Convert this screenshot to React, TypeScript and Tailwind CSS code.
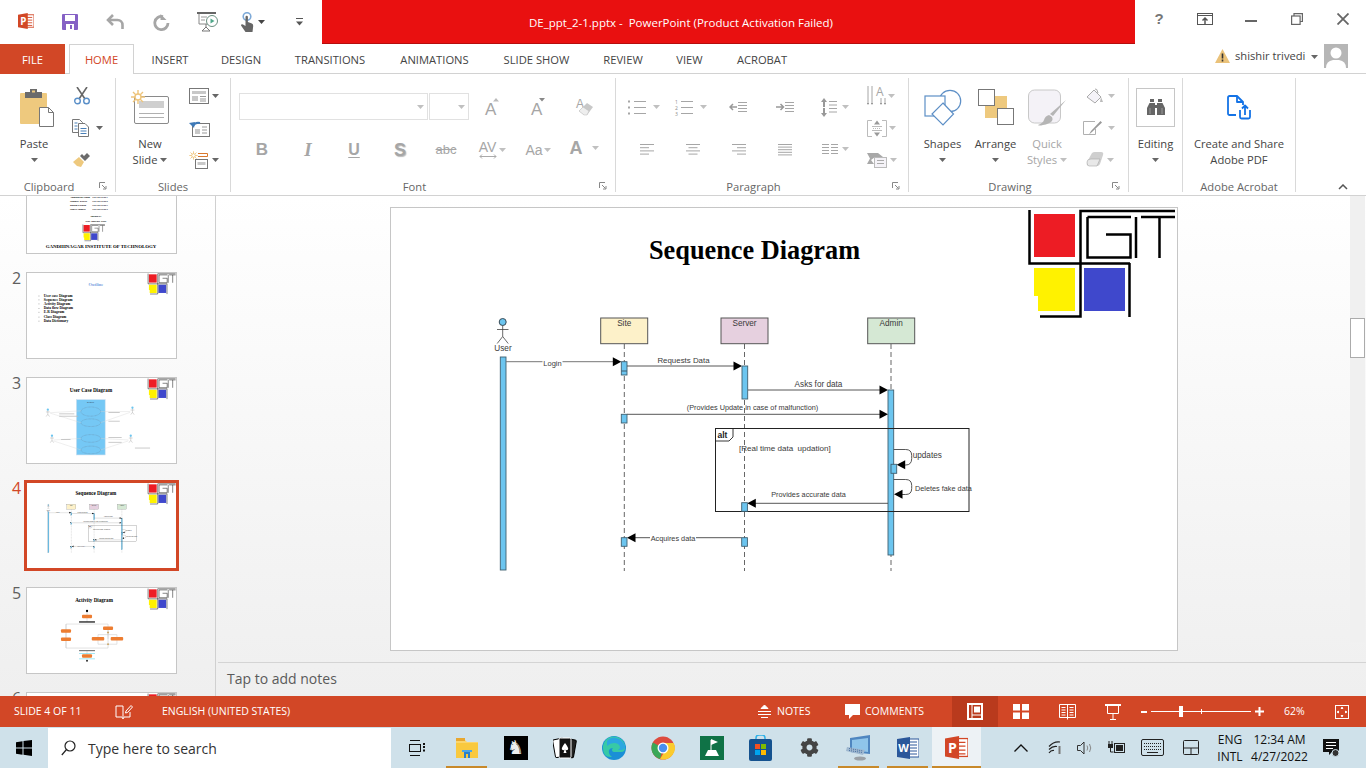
import React from "react";
import { FaCog } from "react-icons/fa";

const G = "#a6a6a6";
const D = "#666666";

const Caret = ({ c = D, className = "" }: { c?: string; className?: string }) => (
  <svg width="7" height="4" viewBox="0 0 7 4" className={`shrink-0 ${className}`}>
    <path d="M0 0h7L3.5 4z" fill={c} />
  </svg>
);

/* ---------- title bar icons ---------- */
const PptLogo = ({ s = 16 }: { s?: number }) => (
  <svg width={s} height={s} viewBox="0 0 18 18">
    <rect x="8" y="2" width="10" height="14" fill="#fff" stroke="#d24726" />
    <path d="M10 5h6M10 8h6M10 11h6M10 14h6" stroke="#d24726" strokeWidth="1" />
    <path d="M0 2l11-2v18L0 16z" fill="#d24726" />
    <text x="2.4" y="13" fontSize="11" fontWeight="700" fill="#fff">P</text>
  </svg>
);

const SaveIcon = () => (
  <svg width="16" height="16" viewBox="0 0 16 16">
    <rect width="16" height="16" rx="1" fill="#8561c5" />
    <rect x="3" y="1" width="10" height="6" fill="#fff" />
    <rect x="4" y="10" width="8" height="6" fill="#fff" />
    <rect x="8" y="11" width="2" height="4" fill="#8561c5" />
  </svg>
);

const UndoIcon = () => (
  <svg width="18" height="16" viewBox="0 0 18 16" fill="none" stroke={G} strokeWidth="2.6">
    <path d="M2.5 6h9a5 5 0 0 1 5 5v4" />
    <path d="M7 1L2 6l5 5" />
  </svg>
);

const RedoIcon = () => (
  <svg width="17" height="17" viewBox="0 0 17 17" fill="none">
    <path d="M10 2.6a6.6 6.6 0 1 0 5 6.4" stroke={G} strokeWidth="2.8" />
    <path d="M6.5 0v6h6z" fill={G} transform="translate(1 0)" />
  </svg>
);

const PresentIcon = () => (
  <svg width="21" height="20" viewBox="0 0 21 20" fill="none">
    <path d="M0 1h19" stroke="#666" strokeWidth="2" />
    <path d="M2 2v10h11" stroke="#888" />
    <path d="M9 12v3M9 15l-4 4h8z" stroke="#777" />
    <path d="M4 5h6M4 8h4" stroke="#999" />
    <circle cx="15" cy="9" r="5.5" fill="#fff" stroke="#6a8f80" />
    <path d="M13.5 6.5v5l4-2.5z" fill="#4fa88a" />
  </svg>
);

const TouchIcon = () => (
  <svg width="13" height="20" viewBox="0 0 13 20" fill="none">
    <circle cx="6" cy="4.5" r="3.8" stroke="#7eaad8" strokeWidth="1.6" />
    <path d="M4.5 5a1.2 1.2 0 0 1 2.4 0v5l4 1.5q1.5.7 1.3 2.5L11.500 20H4.500L0 13.500q0-1.600 2-1l2.500 1.500z" fill="#666" />
  </svg>
);

const QatIcon = () => (
  <svg width="7" height="8" viewBox="0 0 7 8">
    <path d="M0 .5h7" stroke="#555" />
    <path d="M0 3.500h7L3.500 7.500z" fill="#555" />
  </svg>
);

const HelpIcon = () => <span className="text-[#777] text-[15px] font-bold font-['Liberation_Sans']">?</span>;

const DisplayIcon = () => (
  <svg width="16" height="12" viewBox="0 0 16 12" fill="none" stroke="#555">
    <rect x=".5" y=".5" width="15" height="11" />
    <path d="M.5 2.500h15" />
    <path d="M8 11V5M5.500 7.500L8 5l2.500 2.500" strokeWidth="1.5" />
  </svg>
);

const MinIcon = () => <div className="w-[12px] h-[2px] mt-[4px] bg-[#666]" />;

const RestoreIcon = () => (
  <svg width="12" height="12" viewBox="0 0 12 12" fill="none" stroke="#666" strokeWidth="1.2">
    <rect x=".6" y="3" width="8.500" height="8.400" />
    <path d="M3 3V.6h8.400V8.500H9" />
  </svg>
);

const CloseIcon = () => (
  <svg width="12" height="12" viewBox="0 0 12 12" stroke="#666" strokeWidth="1.8">
    <path d="M.5.5l11 11M11.500.5l-11 11" />
  </svg>
);

/* ---------- ribbon icons ---------- */
const PasteIcon = () => (
  <svg width="34" height="38" viewBox="0 0 34 38">
    <rect x="0" y="4" width="27" height="31" rx="1" fill="#eec97e" />
    <path d="M5 3h5V0h7v3h5v6H5z" fill="#6b6b6b" />
    <rect x="12" y="1.500" width="3" height="2" fill="#eec97e" />
    <path d="M19.500 18.500h9l5 5v14h-14z" fill="#fff" stroke="#777" />
    <path d="M28.500 18.500v5h5" fill="none" stroke="#777" />
  </svg>
);

const ScissorsIcon = () => (
  <svg width="16" height="18" viewBox="0 0 16 18" fill="none">
    <path d="M3 0l8 12M13 0L5 12" stroke="#666" strokeWidth="1.6" />
    <circle cx="3.500" cy="14" r="2.800" stroke="#5a8fc8" strokeWidth="1.4" />
    <circle cx="12.500" cy="14" r="2.800" stroke="#5a8fc8" strokeWidth="1.4" />
  </svg>
);

const CopyIcon = () => (
  <svg width="17" height="18" viewBox="0 0 17 18" fill="#fff" stroke="#777">
    <path d="M.5.500h7l3 3v10H.5z" />
    <path d="M6.500 4.500h6.500l3.500 3.500v9.500h-10z" />
    <path d="M2.500 4h3M2.500 7h3M2.500 10h3M8.500 9.500h6M8.500 12h6M8.500 14.500h6" stroke="#4a80b8" />
  </svg>
);

const BrushIcon = () => (
  <svg width="18" height="15" viewBox="0 0 18 15">
    <path d="M0 9l6-5 5 5-3 5-4-1z" fill="#eec97e" />
    <path d="M7 3l5 5 2-2-5-5zM11 3l3-3 3 3-3 3z" fill="#6b6b6b" />
  </svg>
);

const Sun = ({ x, y, s = 1 }: { x: number; y: number; s?: number }) => (
  <g transform={`translate(${x} ${y}) scale(${s})`} stroke="#eec47a" strokeWidth="1.4">
    <path d="M-7 0H7M0-7V7M-5-5L5 5M5-5L-5 5" />
    <circle r="3" fill="#fff" />
  </g>
);

const NewSlideIcon = () => (
  <svg width="39" height="35" viewBox="0 0 39 35" fill="none">
    <rect x="3.500" y="6.500" width="34" height="27" rx="1.500" fill="#fff" stroke="#8a8a8a" />
    <rect x="8" y="11" width="25" height="7" fill="#cfcfcf" />
    <path d="M8 23.500h25M8 27.500h25" stroke="#b0b0b0" />
    <Sun x={7} y={7} />
  </svg>
);

const LayoutIcon = () => (
  <svg width="20" height="16" viewBox="0 0 20 16" fill="#fff" stroke="#777">
    <rect x=".5" y=".5" width="19" height="15" />
    <path d="M3 3h14v3H3zM3 8h6v5H3z" fill="#c8c8c8" stroke="none" />
    <path d="M11 8.500h6M11 11h6M11 13h6" stroke="#999" />
  </svg>
);

const ResetIcon = () => (
  <svg width="21" height="17" viewBox="0 0 21 17" fill="none">
    <rect x="3.500" y="3.500" width="17" height="13" fill="#fff" stroke="#777" />
    <path d="M6 9h5v5H6z" fill="#c8c8c8" />
    <path d="M13 7h5M13 10h5M13 13h5" stroke="#999" />
    <path d="M4 6q2-4 7-3" stroke="#3f7ab8" strokeWidth="2" />
    <path d="M0 3l5 5 1-6z" fill="#3f7ab8" />
  </svg>
);

const SectionIcon = () => (
  <svg width="20" height="18" viewBox="0 0 20 18" fill="none">
    <Sun x={4.500} y={4.500} s={0.6} />
    <path d="M9 2.500h9.500v3H9" stroke="#d9782d" />
    <rect x="6.500" y="8.500" width="12" height="9" fill="#fff" stroke="#777" />
    <rect x="8.500" y="11" width="8" height="3" fill="#c8c8c8" />
  </svg>
);

const lineSets = {
  left: [14, 9, 14, 9],
  center: [14, 9, 14, 9],
  right: [14, 9, 14, 9],
  just: [14, 14, 14, 14, 14],
};

const AlignIcon = ({ kind }: { kind: keyof typeof lineSets }) => {
  const lines = lineSets[kind];
  return (
    <svg width="16" height="13" viewBox="0 0 16 13" stroke={G}>
      {lines.map((w, i) => {
        const x = kind === "left" ? 1 : kind === "right" ? 15 - w : 8 - w / 2;
        const step = kind === "just" ? 2.6 : 3.2;
        return <path key={i} d={`M${x} ${i * step + 1.500}h${w}`} />;
      })}
    </svg>
  );
};

const Columns = () => (
  <span className="flex items-center gap-[4px]">
    <svg width="16" height="12" viewBox="0 0 16 12" stroke={G}>
      <path d="M0 1.500h7M0 4.500h7M0 7.500h7M0 10.500h7M9 1.500h7M9 4.500h7M9 7.500h7M9 10.500h7" />
    </svg>
    <Caret c="#c0c0c0" />
  </span>
);

const BulletIcon = () => (
  <span className="flex items-center gap-[7px]">
    <svg width="19" height="17" viewBox="0 0 19 17" stroke={G}>
      <path d="M7 2.500h12M7 8.500h12M7 14.500h12" />
      <path d="M1 2.500h2M1 8.500h2M1 14.500h2" strokeWidth="2" />
    </svg>
    <Caret c="#c0c0c0" />
  </span>
);

const NumberIcon = () => (
  <span className="flex items-center gap-[7px]">
    <svg width="18" height="17" viewBox="0 0 18 17" stroke={G} className="overflow-visible">
      <path d="M6 2.500h12M6 8.500h12M6 14.500h12" />
      <text x="0" y="4.500" fontSize="5" stroke="none" fill="#8a8a8a">1</text>
      <text x="0" y="10.500" fontSize="5" stroke="none" fill="#8a8a8a">2</text>
      <text x="0" y="16.500" fontSize="5" stroke="none" fill="#8a8a8a">3</text>
    </svg>
    <Caret c="#c0c0c0" />
  </span>
);

const IndentIcon = ({ more }: { more?: boolean }) => (
  <svg width="18" height="12" viewBox="0 0 18 12" fill="none" stroke={G}>
    <path d="M9 1.500h9M9 4.500h9M9 7.500h9M9 10.500h9" />
    {more ? <path d="M0 6h7M4.500 3l3 3-3 3" strokeWidth="1.500" stroke="#999" /> : <path d="M8 6H1M4 3L1 6l3 3" strokeWidth="1.500" stroke="#999" />}
  </svg>
);

const SpacingIcon = () => (
  <span className="flex items-center gap-[5px]">
    <svg width="16" height="19" viewBox="0 0 16 19" fill="none">
      <path d="M3 9V3M3 10v6" stroke="#999" strokeWidth="2" />
      <path d="M0 4l3-4 3 4zM0 15l3 4 3-4z" fill="#999" />
      <path d="M8 3.500h8M8 7h8M8 10.500h8M8 14h8" stroke={G} />
    </svg>
    <Caret c="#c0c0c0" />
  </span>
);

const TextDirIcon = () => (
  <span className="flex items-center gap-[2px]">
    <svg width="19" height="20" viewBox="0 0 19 20" fill="none" stroke={G} className="overflow-visible">
      <path d="M1 0v18M5 0v18M14 12v6M18 12v6" />
      <text x="9" y="10" fontSize="12" stroke="none" fill={G}>A</text>
      <path d="M0 17l1 2 1-2zM4 17l1 2 1-2zM13 17l1 2 1-2zM17 17l1 2 1-2z" fill="#888" stroke="none" />
    </svg>
    <Caret c="#c0c0c0" />
  </span>
);

const TextAlignIcon = () => (
  <span className="flex items-center gap-[2px]">
    <svg width="20" height="17" viewBox="0 0 20 17" fill="#f5f3f8" stroke="#bbb">
      <path d="M5 .500H.500v16H5M15 .500h4.500v16H15" fill="none" />
      <path d="M6 8.500h8" strokeDasharray="1 1" />
      <path d="M10 .500l3 4H7zM10 16.500l3-4H7z" fill="#999" stroke="none" />
      <path d="M5 6.500h10M5 10.500h10" />
    </svg>
    <Caret c="#c0c0c0" />
  </span>
);

const SmartArtIcon = () => (
  <span className="flex items-center gap-[3px]">
    <svg width="20" height="15" viewBox="0 0 20 15" fill="none">
      <path d="M0 0h11l5 4H8l-4 3L7 11H0l3-5.500z" fill="#a8a8a8" />
      <rect x="7.500" y="4.500" width="12" height="10" fill="#f5f3f8" stroke="#bbb" />
      <path d="M10 7.500h7M10 10.500h7" stroke="#aaa" />
    </svg>
    <Caret c="#c0c0c0" />
  </span>
);

const ShapesIcon = () => (
  <svg width="38" height="37" viewBox="0 0 38 37" fill="none" stroke="#5d8fc6" strokeWidth="1.200">
    <circle cx="26" cy="12" r="10.700" />
    <rect x="1" y="7" width="20" height="20" fill="#fff" />
    <path d="M19 14l10.500 11L19 36 8 25z" fill="#fff" />
  </svg>
);

const ArrangeIcon = () => (
  <svg width="36" height="36" viewBox="0 0 36 36">
    <rect x=".5" y=".5" width="16" height="16" fill="#fff" stroke="#777" />
    <rect x="17" y="7" width="12" height="12" fill="#eec97e" />
    <rect x="7" y="17" width="12" height="12" fill="#eec97e" />
    <rect x="19.500" y="19.500" width="16" height="16" fill="#fff" stroke="#777" />
  </svg>
);

const QuickStylesIcon = () => (
  <svg width="38" height="37" viewBox="0 0 38 37" fill="none">
    <rect x=".5" y="1" width="32" height="33" rx="6" fill="#f4f2f7" stroke="#c8c8c8" />
    <path d="M38 11L25 27l-3-2zM21 26q5 2 3 6-3 3-9 4-4 1-5 0 5-2 6-5 1-4 5-5z" fill="#b5b5b5" />
  </svg>
);

const FillIcon = () => (
  <span className="flex items-center gap-[5px]">
    <svg width="17" height="17" viewBox="0 0 17 17" fill="#f5f3f8" stroke="#aaa">
      <path d="M1 9l7-7 7 7-6 6z" />
      <path d="M9 1q2-1 3 4" fill="none" />
      <path d="M15 9l2 5h-3z" fill="#bbb" stroke="none" />
    </svg>
    <Caret c="#c0c0c0" />
  </span>
);

const PenIcon = () => (
  <span className="flex items-center gap-[5px]">
    <svg width="20" height="15" viewBox="0 0 20 15" fill="none" stroke="#b0b0b0">
      <path d="M12 .5H.5v13h12V8" />
      <path d="M19 1.500L9 11l-3 2.500L8 10 17.500 0z" fill="#999" stroke="none" />
    </svg>
    <Caret c="#c0c0c0" />
  </span>
);

const EffectIcon = () => (
  <span className="flex items-center gap-[3px]">
    <svg width="18" height="17" viewBox="0 0 18 17">
      <path d="M1 10l5-9q1-1 3-1h6q3 0 2 3l-3 9q-1 2-3 2H3q-3 0-2-4z" fill="#cfcfcf" />
      <path d="M1 10q0-3 4-3h9l-3 7H3q-2 0-2-4z" fill="#e8e8e8" stroke="#aaa" strokeWidth=".6" />
    </svg>
    <Caret c="#c0c0c0" />
  </span>
);

const BinocularsIcon = () => (
  <svg width="18" height="16" viewBox="0 0 18 16" fill="#666">
    <path d="M3 3V0h4v3zM11 3V0h4v3z" />
    <path d="M2.500 4H8v12H0V9zM10 4h5.500L18 9v7h-8z" />
    <rect x="7" y="6" width="4" height="3" />
    <path d="M3 9v6M15 9v6" stroke="#999" />
  </svg>
);

const AcrobatIcon = () => (
  <svg width="24" height="25" viewBox="0 0 24 25" fill="none" stroke="#1473e6" strokeWidth="1.800" strokeLinejoin="round">
    <path d="M9 20H2.500a1.500 1.500 0 0 1-1.500-1.500V2.500A1.500 1.500 0 0 1 2.500 1H10l6 6v3" />
    <path d="M10 1v6h6" />
    <path d="M13 15v7a1.500 1.500 0 0 0 1.500 1.500h7A1.500 1.500 0 0 0 23 22v-7M18 20v-9M15 13.500l3-3 3 3" />
  </svg>
);

const Launcher = () => (
  <svg width="8" height="8" viewBox="0 0 8 8" fill="none" stroke="#888" className="absolute right-[8px] top-[1px]">
    <path d="M.5 6V.5H6" />
    <path d="M3 3l3.500 3.500M7 4v3H4" />
  </svg>
);

/* ---------- ribbon parts ---------- */
const Group = ({ label, w, children, launcher = true }: { label: string; w: string; children: React.ReactNode; launcher?: boolean }) => (
  <div className={`${w} shrink-0 flex flex-col border-r border-[#d9d9d9]`}>
    <div className="h-[104px] flex">{children}</div>
    <div className={`relative h-[11px] text-[11.200px] leading-[12px] text-[#666] text-center mt-[2px] ${launcher ? "pr-[17px]" : ""}`}>
      {label}
      {launcher && <Launcher />}
    </div>
  </div>
);

const Large = ({ w, icon, lines, c = "text-[#444]", caret = D }: { w: string; icon: React.ReactNode; lines: React.ReactNode[]; c?: string; caret?: string }) => (
  <div className={`${w} shrink-0 flex flex-col items-center text-[11.200px] leading-[16px] ${c}`}>
    <div className="h-[58px] flex items-center justify-center shrink-0">{icon}</div>
    {lines.map((l, i) => (
      <div key={i} className="h-[16px] flex items-center gap-[3px] whitespace-nowrap">{l}</div>
    ))}
    {lines.length < 2 && (
      <div className="h-[16px] flex items-center"><Caret c={caret} /></div>
    )}
  </div>
);

const StackRow = ({ children, w = "w-[28px]", caret }: { children: React.ReactNode; w?: string; caret?: boolean }) => (
  <div className="h-[32px] flex items-center">
    <div className={`${w} flex items-center justify-center`}>{children}</div>
    {caret && <Caret />}
  </div>
);

const Box = ({ w, children }: { w: string; children: React.ReactNode }) => (
  <div className={`${w} h-full shrink-0 flex items-center justify-center`}>{children}</div>
);

const Ltr = ({ children, className = "" }: { children: React.ReactNode; className?: string }) => (
  <span className={`font-['Liberation_Sans'] text-[#a6a6a6] ${className}`}>{children}</span>
);

const Grow = ({ up }: { up?: boolean }) => (
  <svg width="18" height="18" viewBox="0 0 18 18" className="overflow-visible">
    <text x="1" y="17" fontSize="17" fill={G} fontFamily="Liberation Sans">A</text>
    <path d={up ? "M9 3.500h6L12 0z" : "M9 0h6l-3 3.500z"} fill={up ? "#bbb" : "#888"} />
  </svg>
);

const ClearFmt = () => (
  <svg width="18" height="19" viewBox="0 0 18 19" className="overflow-visible">
    <text x="0" y="11" fontSize="12" fill={G} fontFamily="Liberation Sans">A</text>
    <path d="M3 14l8-8 6 4-6 8H8z" fill="#c8c8c8" />
    <path d="M3 14l4-4 6 4-2 4H8z" fill="#eee" stroke="#bbb" strokeWidth=".5" />
  </svg>
);

const Ribbon = () => (
  <div className="h-[122px] shrink-0 flex pt-[4px] pb-[3px] border-b border-[#d2d2d2] bg-white">
    <Group label="Clipboard" w="w-[116px]">
      <div className="ml-[15px] w-[38px]">
        <Large w="w-[38px]" icon={<div className="relative left-[3px] top-[1px]"><PasteIcon /></div>} lines={["Paste"]} />
      </div>
      <div className="ml-[15px] pt-[2px]">
        <StackRow><ScissorsIcon /></StackRow>
        <StackRow caret><div className="-ml-[3px]"><CopyIcon /></div></StackRow>
        <StackRow><BrushIcon /></StackRow>
      </div>
    </Group>
    <Group label="Slides" w="w-[115px]" launcher={false}>
      <div className="ml-[14px]">
        <Large w="w-[40px]" icon={<NewSlideIcon />} lines={["New", <>Slide<Caret /></>]} />
      </div>
      <div className="ml-[16px] pt-[2px]">
        <StackRow w="w-[26px]" caret><LayoutIcon /></StackRow>
        <StackRow w="w-[26px]"><ResetIcon /></StackRow>
        <StackRow w="w-[26px]" caret><SectionIcon /></StackRow>
      </div>
    </Group>
    <Group label="Font" w="w-[385px]">
      <div className="pl-[8px] pt-[15px] flex flex-col">
        <div className="h-[27px] flex">
          <div className="w-[189px] border border-[#e1e1e1] flex items-center justify-end pr-[3px]"><Caret c="#c0c0c0" /></div>
          <div className="w-[40px] ml-[1px] border border-[#e1e1e1] flex items-center justify-end pr-[3px]"><Caret c="#c0c0c0" /></div>
          <Box w="w-[47px]"><Grow up /></Box>
          <Box w="w-[46px]"><Grow /></Box>
          <Box w="w-[46px]"><ClearFmt /></Box>
        </div>
        <div className="h-[30px] mt-[15px] flex">
          <Box w="w-[46px]"><Ltr className="text-[17px] font-bold">B</Ltr></Box>
          <Box w="w-[46px]"><span className="font-['Liberation_Serif'] text-[#a6a6a6] text-[19px] italic font-bold">I</span></Box>
          <Box w="w-[46px]"><Ltr className="text-[16px] font-bold underline underline-offset-2">U</Ltr></Box>
          <Box w="w-[46px]"><Ltr className="text-[18px] font-bold [text-shadow:1px_1px_1px_#bbb]">S</Ltr></Box>
          <Box w="w-[46px]"><Ltr className="text-[13px] line-through">abc</Ltr></Box>
          <Box w="w-[46px]">
            <div className="flex items-center gap-[2px]">
              <div className="flex flex-col items-center">
                <Ltr className="text-[14px] leading-[13px]">AV</Ltr>
                <svg width="18" height="5" viewBox="0 0 18 5" fill="none" stroke="#aaa"><path d="M1 2.500h16M3 .5L1 2.500l2 2M15 .5l2 2-2 2" /></svg>
              </div>
              <Caret c="#c0c0c0" />
            </div>
          </Box>
          <Box w="w-[46px]"><div className="flex items-center gap-[1px]"><Ltr className="text-[14px]">Aa</Ltr><Caret c="#c0c0c0" /></div></Box>
          <Box w="w-[46px]"><div className="flex items-center gap-[9px] -mt-[4px]"><Ltr className="text-[#8a8a8a] text-[18px] font-bold">A</Ltr><Caret c="#c0c0c0" /></div></Box>
        </div>
      </div>
    </Group>
    <Group label="Paragraph" w="w-[293px]">
      <div className="w-[246px] pt-[14px] flex flex-col">
        <div className="h-[30px] flex pl-[4px]">
          <Box w="w-[47px]"><BulletIcon /></Box>
          <Box w="w-[47px]"><NumberIcon /></Box>
          <Box w="w-[47px]"><IndentIcon /></Box>
          <Box w="w-[47px]"><IndentIcon more /></Box>
          <Box w="w-[54px]"><SpacingIcon /></Box>
        </div>
        <div className="h-[30px] mt-[12px] flex pl-[8px]">
          <Box w="w-[46px]"><AlignIcon kind="left" /></Box>
          <Box w="w-[46px]"><AlignIcon kind="center" /></Box>
          <Box w="w-[46px]"><AlignIcon kind="right" /></Box>
          <Box w="w-[46px]"><AlignIcon kind="just" /></Box>
          <Box w="w-[54px]"><Columns /></Box>
        </div>
      </div>
      <div className="ml-[5px] pt-[2px]">
        <div className="h-[32px] flex items-center"><TextDirIcon /></div>
        <div className="h-[32px] flex items-center"><TextAlignIcon /></div>
        <div className="h-[32px] flex items-center"><SmartArtIcon /></div>
      </div>
    </Group>
    <Group label="Drawing" w="w-[220px]">
      <div className="ml-[7px] flex">
        <Large w="w-[53px]" icon={<ShapesIcon />} lines={["Shapes"]} />
        <Large w="w-[53px]" icon={<ArrangeIcon />} lines={["Arrange"]} />
        <Large w="w-[50px]" c="text-[#a6a6a6]" icon={<QuickStylesIcon />} lines={["Quick", <>Styles<Caret c="#c0c0c0" /></>]} />
      </div>
      <div className="ml-[11px] pt-[2px]">
        <div className="h-[32px] flex items-center pl-[3px]"><FillIcon /></div>
        <div className="h-[32px] flex items-center"><PenIcon /></div>
        <div className="h-[32px] flex items-center pl-[3px]"><EffectIcon /></div>
      </div>
    </Group>
    <Group label="" w="w-[54px]" launcher={false}>
      <Large
        w="w-full"
        icon={<div className="w-[39px] h-[39px] border border-[#c6c6c6] flex items-center justify-center"><BinocularsIcon /></div>}
        lines={["Editing"]}
      />
    </Group>
    <Group label="Adobe Acrobat" w="w-[113px]" launcher={false}>
      <Large w="w-full" icon={<AcrobatIcon />} lines={["Create and Share", "Adobe PDF"]} />
    </Group>
    <div className="flex-1 flex items-end justify-end pr-[18px] pb-[2px]">
      <svg width="10" height="6" viewBox="0 0 10 6" fill="none" stroke="#555" strokeWidth="1.500"><path d="M1 5l4-4 4 4" /></svg>
    </div>
  </div>
);

/* ---------- slide drawings, in screen coordinates ---------- */
const Logo = () => (
  <g>
    <rect x="1034" y="214" width="41" height="43" fill="#ed1c24" />
    <path d="M1034 268h41v43h-37v-15h-4z" fill="#fff200" />
    <rect x="1084" y="268" width="41" height="43" fill="#3f48cc" />
    <path
      d="M1029.500 210v53.500h100.500M1040 316.500h40.500V211H1175M1087.500 217H1131M1141 217h34M1087.500 217v40.500H1130.500V234.500H1106M1136 217v41M1159.500 217v41M1129.500 263v54"
      fill="none"
      stroke="#000"
      strokeWidth="2.500"
    />
  </g>
);

const Act = ({ x, y1, y2, w = 5.700 }: { x: number; y1: number; y2: number; w?: number }) => (
  <rect x={x} y={y1} width={w} height={y2 - y1} fill="#6cc5ef" stroke="#3f5f70" strokeWidth="0.900" />
);

const Head = ({ x, y, left }: { x: number; y: number; left?: boolean }) => (
  <path d={left ? `M${x} ${y}l8.500-4.500v9z` : `M${x} ${y}l-8.500-4.500v9z`} fill="#000" />
);

const Lbl = ({ x, y, children, anchor = "middle", bg, size = 8.200 }: { x: number; y: number; children: string; anchor?: "middle" | "start"; bg?: number; size?: number }) => (
  <>
    {bg && <rect x={x - bg / 2} y={y - 7} width={bg} height={9} fill="#fff" />}
    <text x={x} y={y} fontSize={size} fill="#3a3a3a" textAnchor={anchor}>{children}</text>
  </>
);

const Lifebox = ({ x, fill, name }: { x: number; fill: string; name: string }) => (
  <>
    <rect x={x} y="318" width="47" height="25.700" fill={fill} stroke="#555" strokeWidth="1" />
    <text x={x + 23.500} y="326" fontSize="8.200" fill="#3a3a3a" textAnchor="middle">{name}</text>
  </>
);

const Sequence = () => (
  <g>
    <g stroke="#555" strokeWidth="0.900" strokeDasharray="5 3">
      <path d="M624.300 344V571M744.500 344V571M891 344V571" />
    </g>
    <Lifebox x={600.700} fill="#fdf1c9" name="Site" />
    <Lifebox x={721} fill="#e6d0df" name="Server" />
    <Lifebox x={867.700} fill="#d5e8d4" name="Admin" />

    <circle cx="502.700" cy="322" r="3.500" fill="#6cc5ef" stroke="#3a4a55" />
    <path d="M502.700 325.500v11M497 329.500h11.500M502.700 336.500l-5.500 7M502.700 336.500l5.500 7" stroke="#444" strokeWidth="0.800" fill="none" />
    <Lbl x={503} y={351}>User</Lbl>
    <Act x={500.300} y1={357} y2={570} />

    <path d="M506 361.700H613" stroke="#777" strokeWidth="1" />
    <Lbl x={552.500} y={366} bg={20} size={7.500}>Login</Lbl>
    <Head x={621.300} y={361.700} />
    <Act x={621.300} y1={361.700} y2={375} />
    <path d="M621.300 371h5.700" stroke="#3f5f70" />

    <path d="M627 366H734" stroke="#444" strokeWidth="0.900" />
    <Lbl x={683.500} y={362.500} size={7.900}>Requests Data</Lbl>
    <Head x={742} y={366} />
    <Act x={742} y1={366} y2={399} />

    <path d="M748 390H880" stroke="#444" strokeWidth="0.900" />
    <Lbl x={818.500} y={386.500}>Asks for data</Lbl>
    <Head x={888} y={390} />
    <Act x={888} y1={390} y2={555} />

    <path d="M627 414.300H880" stroke="#444" strokeWidth="0.900" />
    <Lbl x={752.500} y={409.500} size={7.300}>(Provides Update in case of malfunction)</Lbl>
    <Head x={888} y={414.300} />
    <Act x={621.300} y1={414.300} y2={423} />

    <rect x="715.500" y="428.500" width="253.500" height="83" fill="none" stroke="#222" strokeWidth="1" />
    <path d="M715.500 441H729l4-4v-8.500" fill="none" stroke="#222" strokeWidth="0.900" />
    <text x="717.500" y="437.500" fontSize="8.500" fontWeight="700" fill="#222">alt</text>
    <text x="739" y="450.500" fontSize="8.050" fill="#3a3a3a" xmlSpace="preserve">[Real time data  updation]</text>

    <path d="M893.700 449.500h12q6 0 6 6v3q0 6.500-6 6.500h-3" fill="none" stroke="#444" strokeWidth="0.900" />
    <Head x={896.700} y={464.700} left />
    <Act x={891} y1={464.300} y2={473.300} />
    <Lbl x={912.700} y={458} anchor="start">updates</Lbl>

    <path d="M893.700 479.500h12q6 0 6 6v3q0 6-6 6h-4" fill="none" stroke="#444" strokeWidth="0.900" />
    <Head x={894} y={494.300} left />
    <Lbl x={915} y={490.500} anchor="start" size={7.300}>Deletes fake data</Lbl>

    <path d="M888 503.300H755" stroke="#444" strokeWidth="0.900" />
    <Head x={747.300} y={503.300} left />
    <Lbl x={808.500} y={497} size={7.300}>Provides accurate data</Lbl>
    <Act x={741.700} y1={502.700} y2={511.300} />

    <path d="M741.700 537.700H634" stroke="#444" strokeWidth="0.900" />
    <Head x={627} y={537.700} left />
    <Lbl x={673} y={540.500} bg={46} size={7.300}>Acquires data</Lbl>
    <Act x={741.700} y1={537.700} y2={546.300} />
    <Act x={621.300} y1={537.700} y2={546.300} />
  </g>
);

const Title = ({ children, y, x = 754, size = 27 }: { children: string; y: number; x?: number; size?: number }) => (
  <text x={x} y={y} textAnchor="middle" fontSize={size} fontWeight="700" fill="#000" fontFamily="Liberation Serif">{children}</text>
);

const students = [
  ["Anmolpreet singh", "190120107001", 366],
  ["Tanmay Rawal", "190120107002", 386],
  ["Rohan Pathak", "190120107003", 404],
  ["Tanya Shukla", "190120107004", 424],
] as const;

const Slide1Body = () => (
  <g fontFamily="Liberation Serif" fontWeight="700" fill="#000" fontSize="14">
    {students.map(([name, id, y]) => (
      <g key={id}>
        <text x="617" y={y}>{name}</text>
        <text x="733" y={y} fill="#223">{id}</text>
      </g>
    ))}
    <text x="754" y="465" textAnchor="middle" fontSize="13">Guided by</text>
    <text x="754" y="490" textAnchor="middle" fontSize="13">Prof. Bhargav Patel</text>
    <g transform="translate(-138.400 333) scale(0.800)"><Logo /></g>
    <text x="781" y="624" textAnchor="middle" fontSize="26">GANDHINAGAR INSTITUTE OF TECHNOLOGY</text>
  </g>
);

const outline = [
  ["User case Diagram", 332],
  ["Sequence Diagram", 352],
  ["Activity Diagram", 373],
  ["Data flow Diagram", 397],
  ["E-R Diagram", 417],
  ["Class Diagram", 442],
  ["Data Dictionary", 463],
] as const;

const Slide2Body = () => (
  <g fontFamily="Liberation Serif">
    <text x="754" y="276" textAnchor="middle" fontSize="24" fill="#7a9fe0" fontWeight="700">Outline</text>
    {outline.map(([t, y]) => (
      <g key={t}>
        <path d={`M449 ${y - 5}h8`} stroke="#777" strokeWidth="2" />
        <text x="478" y={y} fontSize="19" fontWeight="700" fill="#000">{t}</text>
      </g>
    ))}
  </g>
);

const UcActor = ({ x, y }: { x: number; y: number }) => (
  <g fill="none" stroke="#999" strokeWidth="2">
    <circle cx={x} cy={y} r="6" fill="#6cc5ef" stroke="none" />
    <path d={`M${x} ${y + 6}v18M${x - 10} ${y + 12}h20M${x} ${y + 24}l-9 12M${x} ${y + 24}l9 12`} />
  </g>
);

const Slide3Body = () => (
  <g>
    <rect x="651" y="320" width="152" height="288" fill="#75c8f5" stroke="#cde" strokeWidth="3" />
    <g fill="none" stroke="#6a8aa5" strokeWidth="2.500" strokeDasharray="4 3">
      <ellipse cx="727" cy="382" rx="52" ry="24" />
      <ellipse cx="727" cy="440" rx="52" ry="20" />
      <ellipse cx="727" cy="522" rx="52" ry="20" />
      <ellipse cx="727" cy="582" rx="52" ry="20" />
    </g>
    <g stroke="#d5d5d5" strokeWidth="2" fill="none">
      <path d="M512 388L675 378M512 390L675 440M935 382L778 382M935 386L778 440M530 530L675 522M530 535L675 582M925 530L778 522M925 535L778 582" />
    </g>
    <g fill="#bbb">
      <rect x="560" y="392" width="80" height="4" />
      <rect x="560" y="404" width="100" height="4" />
      <rect x="820" y="385" width="60" height="4" />
      <rect x="820" y="430" width="60" height="4" />
      <rect x="570" y="525" width="50" height="4" />
      <rect x="820" y="515" width="70" height="4" />
      <rect x="820" y="540" width="70" height="4" />
      <rect x="960" y="570" width="80" height="4" />
    </g>
    <UcActor x={500} y={372} />
    <UcActor x={947} y={362} />
    <UcActor x={522} y={508} />
    <UcActor x={938} y={508} />
    <text x="725" y="338" textAnchor="middle" fontSize="11" fill="#345">System</text>
  </g>
);

const Node = ({ x, y, w }: { x: number; y: number; w: number }) => <rect x={x - w / 2} y={y - 9} width={w} height={18} rx="5" fill="#ed7d31" />;

const Slide5Body = () => (
  <g>
    <path
      d="M707 327V384M596 395H818V520H596zM596 395V520M707 534v27M818 417V472M765 472V450H865V472M765 472V500H865V472"
      stroke="#c4c4c4"
      strokeWidth="2.500"
      fill="none"
    />
    <circle cx="707" cy="327" r="6" fill="#000" />
    <rect x="665" y="381" width="84" height="6" fill="#000" />
    <Node x={707} y={356} w={53} />
    <Node x={596} y={431} w={53} />
    <Node x={596} y={474} w={53} />
    <Node x={818} y={417} w={53} />
    <Node x={765} y={472} w={66} />
    <Node x={865} y={472} w={66} />
    <path d="M818 433l6 6-6 6-6-6zM818 494l6 6-6 6-6-6z" fill="#c9a15a" />
    <rect x="665" y="532" width="84" height="4" fill="#333" />
    <rect x="665" y="546" width="84" height="3" fill="#5fd5ec" />
    <rect x="665" y="575" width="84" height="3" fill="#5fd5ec" />
    <Node x={707} y={561} w={53} />
    <circle cx="707" cy="586" r="5" fill="#222" />
  </g>
);

const Thumb = ({ n, active, children }: { n?: number; active?: boolean; children?: React.ReactNode }) => (
  <div className="flex h-[87px] shrink-0">
    <div className={`w-[26px] pl-[12px] text-[16px] leading-[17px] -mt-[2px] ${active ? "text-[#d24726]" : "text-[#5f5f5f]"}`}>{n}</div>
    <div className={`w-[151px] h-[87px] bg-white border ${active ? "border-[#d24726] ring-2 ring-[#d24726]" : "border-[#c6c6c6]"}`}>
      <svg viewBox="390 207 787 443" preserveAspectRatio="none" className="w-full h-full font-['Liberation_Sans']">
        {children}
      </svg>
    </div>
  </div>
);

const Pane = () => (
  <div className="w-[216px] shrink-0 border-r border-[#d0d0d0] overflow-hidden">
    <div className="flex flex-col gap-[18px] -mt-[29px]">
      <Thumb><Slide1Body /></Thumb>
      <Thumb n={2}><Logo /><Slide2Body /></Thumb>
      <Thumb n={3}><Logo /><Title x={728} y={281}>User Case Diagram</Title><Slide3Body /></Thumb>
      <Thumb n={4} active><Logo /><Title y={270}>Sequence Diagram</Title><Sequence /></Thumb>
      <Thumb n={5}><Logo /><Title x={744} y={279}>Activity Diagram</Title><Slide5Body /></Thumb>
      <Thumb n={6}><Logo /></Thumb>
    </div>
  </div>
);

const Editor = () => (
  <div className="flex-1 flex flex-col min-w-0">
    <div className="h-[466px] flex">
      <div className="w-[1134px] pl-[174px] pt-[11px]">
        <div className="relative w-[788px] h-[444px] bg-white border border-[#c6c6c6]">
          <svg viewBox="391 208 786 442" className="w-full h-full font-['Liberation_Sans']">
            <Logo />
            <Sequence />
          </svg>
          <div className="absolute left-0 w-[727px] top-[28px] text-center font-['Liberation_Serif'] font-bold text-[26.300px] leading-[30px] text-black">
            Sequence Diagram
          </div>
        </div>
      </div>
      <div className="w-[15px] h-[446px] bg-[#f0f0f0]">
        <div className="w-[15px] h-[40px] mt-[122px] bg-white border border-[#ababab]" />
      </div>
    </div>
    <div className="h-[34px] ml-[2px] border-t border-[#d4d4d4] pl-[9px] text-[14px] leading-[32px] text-[#5a5a5a]">
      Tap to add notes
    </div>
  </div>
);

/* ---------- status bar ---------- */
const StatusBar = () => (
  <div className="h-[31px] shrink-0 flex items-center bg-[#d24726] text-white text-[10.500px] whitespace-nowrap">
    <div className="w-[69px] ml-[14px]">SLIDE 4 OF 11</div>
    <svg width="18" height="16" viewBox="0 0 18 16" fill="none" stroke="#fff" className="ml-[32px]">
      <path d="M8 2H1v11h6l1 2 1-2h6V8M8 2v11" />
      <path d="M11 7l5-5.500 1.500 1.500-5 5.500-2 .5z" />
    </svg>
    <div className="w-[130px] ml-[29px]">ENGLISH (UNITED STATES)</div>
    <div className="ml-auto h-full w-[608px] flex items-center">
      <svg width="13" height="14" viewBox="0 0 13 14" stroke="#fff" fill="none">
        <path d="M6.500 0L3 3.500h7z" fill="#fff" />
        <path d="M0 6.500h13M0 9.500h13M3 12.500h7" />
      </svg>
      <div className="w-[35px] ml-[6px]">NOTES</div>
      <svg width="15" height="16" viewBox="0 0 15 16" className="ml-[33px]">
        <path d="M0 0h15v11H8l-4 4v-4H0z" fill="#fff" />
      </svg>
      <div className="w-[62px] ml-[5px]">COMMENTS</div>
      <div className="ml-[25px] w-[46px] h-full bg-[#b93a1d] flex items-center justify-center">
        <svg width="16" height="17" viewBox="0 0 16 17" fill="none" stroke="#fff">
          <rect x="1" y="1" width="14" height="15" strokeWidth="2" />
          <path d="M5 2v13M5 12h10" strokeWidth="1" />
          <rect x="7" y="3.500" width="6" height="6" fill="#fff" stroke="none" />
        </svg>
      </div>
      <div className="w-[46px] h-full flex items-center justify-center">
        <svg width="16" height="15" viewBox="0 0 16 15" fill="#fff"><path d="M0 0h7v6.500H0zM9 0h7v6.500H9zM0 8.500h7V15H0zM9 8.500h7V15H9z" /></svg>
      </div>
      <div className="w-[46px] h-full flex items-center justify-center">
        <svg width="17" height="16" viewBox="0 0 17 16" fill="none" stroke="#fff">
          <path d="M.5.5h16v13H.5zM8.500.5v15M2.500 3.500h4M2.500 6h4M2.500 8.500h4M2.500 11h4M10.500 3.500h4M10.500 6h4M10.500 8.500h4M10.500 11h4" />
        </svg>
      </div>
      <div className="w-[46px] h-full flex items-center justify-center">
        <svg width="16" height="16" viewBox="0 0 16 16" fill="none" stroke="#fff">
          <path d="M0 1h16" strokeWidth="2" />
          <path d="M2.500 1v8.500h11V1M8 9.500V15M5 15.500h6" />
        </svg>
      </div>
      <div className="w-[6px] h-[2px] ml-[5px] bg-white" />
      <div className="relative w-[100px] h-px ml-[4px] bg-white">
        <div className="absolute left-[28px] -top-[5px] w-[4px] h-[11px] bg-white" />
        <div className="absolute left-[50px] -top-[2px] w-px h-[5px] bg-white" />
      </div>
      <svg width="9" height="9" viewBox="0 0 9 9" stroke="#fff" strokeWidth="2" className="ml-[4px]"><path d="M4.500 0v9M0 4.500h9" /></svg>
      <div className="w-[21px] ml-[20px]">62%</div>
      <svg width="14" height="14" viewBox="0 0 14 14" fill="none" stroke="#fff" className="ml-[30px]">
        <rect x=".5" y=".5" width="13" height="13" />
        <path d="M7 2v2M7 10v2M2 7h2M10 7h2" strokeWidth="1.500" />
        <path d="M5.500 4h3L7 2zM5.500 10h3L7 12zM4 5.500v3L2 7zM10 5.500v3L12 7z" fill="#fff" stroke="none" />
      </svg>
    </div>
  </div>
);

/* ---------- taskbar ---------- */
const TaskBtn = ({ children, run, active }: { children: React.ReactNode; run?: boolean; active?: boolean }) => (
  <div className={`relative w-[49px] h-full flex items-center justify-center ${active ? "bg-[#edf2f5]" : ""}`}>
    {children}
    {run && <div className={`absolute bottom-0 h-[2px] bg-[#c8892a] ${active ? "left-0 right-0" : "left-[4px] right-[4px]"}`} />}
  </div>
);

const Taskbar = () => (
  <div className="h-[41px] shrink-0 flex bg-[#cfe1ea] text-[#111] font-['Open_Sans',sans-serif]">
    <div className="w-[48px] flex items-center justify-center">
      <svg width="16" height="16" viewBox="0 0 16 16" fill="#000">
        <path d="M0 2.300l6.500-1v6.300H0zM7.500 1.100L16 0v7.600H7.500zM0 8.500h6.500v6.300l-6.500-1zM7.500 8.500H16V16l-8.500-1.200z" />
      </svg>
    </div>
    <div className="w-[343px] bg-white border-t border-[#cfe1ea] flex items-center pl-[13px] text-[14px] text-[#333]">
      <svg width="15" height="16" viewBox="0 0 15 16" fill="none" stroke="#222" strokeWidth="1.200">
        <circle cx="9" cy="6" r="5" />
        <path d="M5.500 9.500L.8 15" />
      </svg>
      <span className="ml-[12px] whitespace-nowrap">Type here to search</span>
    </div>
    <div className="w-[51px] flex items-center justify-center">
      <svg width="16" height="16" viewBox="0 0 16 16" fill="none" stroke="#111">
        <path d="M1 .5h10M1 15.500h10" />
        <rect x=".5" y="4.500" width="11" height="7" />
        <path d="M14 4h2M14 7h2M14 10.500h2" strokeWidth="2" />
      </svg>
    </div>
    <TaskBtn run>
      <svg width="22" height="20" viewBox="0 0 22 20">
        <path d="M0 2h9l2 2h11v16H0z" fill="#fbd56b" />
        <path d="M0 0h9v3H0z" fill="#e8a72f" />
        <path d="M0 5h22v15H0z" fill="#f9c93f" />
        <path d="M8 14h6v6H8z" fill="#2a7fcc" />
        <path d="M6 12h10v2H6z" fill="#4aa5e8" />
        <path d="M10 16h2v4h-2z" fill="#f9c93f" />
      </svg>
    </TaskBtn>
    <TaskBtn>
      <div className="w-[24px] h-[24px] bg-black flex items-center justify-center text-[#eee] text-[19px] leading-none font-['DejaVu_Sans']">♞</div>
    </TaskBtn>
    <TaskBtn>
      <svg width="24" height="24" viewBox="0 0 24 24">
        <rect x="1" y="3" width="11" height="18" rx="1.500" fill="#fff" stroke="#000" transform="rotate(-10 6 12)" />
        <rect x="11" y="3" width="11" height="18" rx="1.500" fill="#222" stroke="#000" transform="rotate(10 16 12)" />
        <rect x="6" y="2" width="12" height="20" rx="1.500" fill="#111" stroke="#fff" />
        <path d="M12 7q-4 5-3 6.500 1.500 1.500 2.500 0L10.500 17h3l-1-3.500q1 1.500 2.500 0 1-1.500-3-6.500z" fill="#fff" />
      </svg>
    </TaskBtn>
    <TaskBtn>
      <svg width="24" height="24" viewBox="0 0 24 24">
        <circle cx="12" cy="12" r="12" fill="#1b8fd6" />
        <path d="M1 12a11 11 0 0 1 22-1q.5 5-4 5h-6q-3 0-3-2 0-1 1-2-3 0-4 2-1 4 3 7Q1 22 1 12z" fill="#37c9a6" />
        <path d="M5 5q6-7 15 0 4 5 3 7-1 2-4 2h-3q2-1 2-3-1-4-6-4-4 0-7 3z" fill="#2ba6e0" />
      </svg>
    </TaskBtn>
    <TaskBtn>
      <svg width="24" height="24" viewBox="0 0 24 24">
        <circle cx="12" cy="12" r="11.500" fill="#dd4b3e" />
        <path d="M12 12L1.800 6.500A11.500 11.500 0 0 0 9 23z" fill="#3aa757" />
        <path d="M12 7h10.700a11.500 11.500 0 0 1-13.700 16L15 13z" fill="#fbcb2d" />
        <circle cx="12" cy="12" r="5.500" fill="#fff" />
        <circle cx="12" cy="12" r="4.200" fill="#4a8ff0" />
      </svg>
    </TaskBtn>
    <TaskBtn>
      <svg width="24" height="24" viewBox="0 0 24 24">
        <rect width="24" height="24" fill="#0f7246" />
        <path d="M11 4v11" stroke="#fff" />
        <path d="M11 3l7 3-7 3z" fill="#fff" />
        <path d="M5 20l3-6h8l3 6z" fill="#fff" />
      </svg>
    </TaskBtn>
    <TaskBtn>
      <svg width="23" height="26" viewBox="0 0 23 26">
        <path d="M7 5V3a3 3 0 0 1 3-3h3a3 3 0 0 1 3 3v2" fill="none" stroke="#2eb1e8" strokeWidth="1.500" />
        <rect y="4" width="23" height="22" rx="2" fill="#15528f" />
        <rect x="6" y="9" width="5" height="5" fill="#f25022" />
        <rect x="12" y="9" width="5" height="5" fill="#7fba00" />
        <rect x="6" y="15" width="5" height="5" fill="#00a4ef" />
        <rect x="12" y="15" width="5" height="5" fill="#ffb900" />
      </svg>
    </TaskBtn>
    <TaskBtn><FaCog size={19} color="#444" /></TaskBtn>
    <TaskBtn run>
      <svg width="26" height="26" viewBox="0 0 26 26">
        <path d="M4 3l20-3v19L4 17z" fill="#4f86c0" />
        <path d="M6 5l16-2v14L6 15z" fill="#8fc5ea" />
        <path d="M1 12l18 3-2 5-17-4z" fill="#9fb8d0" />
        <path d="M3 13.500l14 2.500M3 15.500l13 2" stroke="#4a70a0" strokeDasharray="1 1" />
        <ellipse cx="14" cy="23.500" rx="6" ry="2" fill="#9aa0a6" />
      </svg>
    </TaskBtn>
    <TaskBtn run>
      <svg width="22" height="22" viewBox="0 0 22 22">
        <rect x="9" y="2" width="13" height="18" fill="#fff" stroke="#2b579a" />
        <path d="M11 5h9M11 8h9M11 11h9M11 14h9M11 17h9" stroke="#2b579a" />
        <path d="M0 2L13 0v22L0 20z" fill="#2b579a" />
        <text x="1.200" y="15" fontSize="11" fontWeight="700" fill="#fff">W</text>
      </svg>
    </TaskBtn>
    <TaskBtn run active><PptLogo s={23} /></TaskBtn>
    <div className="ml-[24px] w-[32px] flex items-center justify-center">
      <svg width="14" height="8" viewBox="0 0 14 8" fill="none" stroke="#111" strokeWidth="1.300"><path d="M.5 7.500L7 1l6.500 6.500" /></svg>
    </div>
    <div className="w-[34px] flex items-center justify-center">
      <svg width="13" height="13" viewBox="0 0 13 13" fill="none" stroke="#222" strokeWidth="1.200">
        <path d="M1 5.500q5-5.500 11-4.500M1 8.500q4-4 8-3M1 12q2-3 5-2.500" />
        <path d="M11.500 5v8" strokeWidth="2" stroke="#777" />
      </svg>
    </div>
    <div className="w-[27px] flex items-center justify-center">
      <svg width="16" height="14" viewBox="0 0 16 14" fill="none" stroke="#333">
        <path d="M.5 4.500h3L7 1v12L3.500 9.500h-3z" />
        <path d="M10 4.500q1.500 2.500 0 5M12.500 3q2.500 4 0 8" stroke="#888" />
      </svg>
    </div>
    <div className="w-[36px] flex items-center justify-center">
      <svg width="17" height="13" viewBox="0 0 17 13" fill="#222">
        <path d="M1 0v3M4 0v3" stroke="#222" />
        <rect y="3" width="5" height="4" />
        <path d="M2.500 7v4h3" fill="none" stroke="#222" />
        <rect x="6.500" y="2.500" width="10" height="9" fill="none" stroke="#222" />
        <rect x="8" y="4" width="7" height="6" />
      </svg>
    </div>
    <div className="w-[37px] flex items-center justify-center">
      <svg width="23" height="17" viewBox="0 0 23 17" fill="none" stroke="#222">
        <rect x=".5" y=".5" width="22" height="16" rx="1.500" />
        <path d="M3 4.500h17M3 7.500h17M3 10.500h17" strokeDasharray="1 1" />
        <path d="M6 13.500h11" />
      </svg>
    </div>
    <div className="w-[40px] flex items-center justify-center">
      <svg width="16" height="15" viewBox="0 0 16 15" fill="none" stroke="#222">
        <rect x=".5" y=".5" width="15" height="14" rx="1" />
        <path d="M.5 8h15M8 8v6.500" />
      </svg>
    </div>
    <div className="w-[38px] text-[12px] leading-[17px] flex flex-col items-center justify-center">
      <span>ENG</span>
      <span>INTL</span>
    </div>
    <div className="w-[61px] text-[12px] leading-[17px] flex flex-col items-center justify-center whitespace-nowrap">
      <span>12:34 AM</span>
      <span>4/27/2022</span>
    </div>
    <div className="w-[42px] flex items-center justify-center">
      <svg width="16" height="18" viewBox="0 0 16 18">
        <path d="M0 0h16v13H9l-3 3v-3H0z" fill="#111" />
        <path d="M3 3.500h10M3 6.500h10M3 9.500h7" stroke="#fff" />
        <circle cx="12.500" cy="14" r="3.500" fill="#333" stroke="#cfe1ea" />
      </svg>
    </div>
  </div>
);

const tabs = [
  { t: "INSERT", w: "w-[36px] ml-[18px]" },
  { t: "DESIGN", w: "w-[40px] ml-[33px]" },
  { t: "TRANSITIONS", w: "w-[72px] ml-[33px]" },
  { t: "ANIMATIONS", w: "w-[71px] ml-[33px]" },
  { t: "SLIDE SHOW", w: "w-[67px] ml-[33px]" },
  { t: "REVIEW", w: "w-[40px] ml-[33px]" },
  { t: "VIEW", w: "w-[27px] ml-[33px]" },
  { t: "ACROBAT", w: "w-[52px] ml-[33px]" },
];

export default function App() {
  return (
    <div className="w-[1366px] h-[768px] flex flex-col overflow-hidden bg-white font-['Open_Sans',sans-serif] text-[#444]">
      <div className="h-[44px] shrink-0 flex">
        <div className="pl-[4px] flex">
          <div className="w-[44px] h-[44px] -mt-[1px] flex items-center justify-center"><PptLogo /></div>
          <div className="w-[44px] flex items-center justify-center"><SaveIcon /></div>
          <div className="w-[46px] flex items-center justify-center"><UndoIcon /></div>
          <div className="w-[46px] flex items-center justify-center"><RedoIcon /></div>
          <div className="w-[46px] flex items-center justify-center"><PresentIcon /></div>
          <div className="w-[46px] flex items-center justify-center gap-[4px]"><TouchIcon /><Caret c="#444" /></div>
          <div className="w-[46px] flex items-center justify-center"><QatIcon /></div>
        </div>
        <div className="w-[813px] h-[44px] bg-[#e91010] border-b border-[#b50d0d] pl-[207px] text-white text-[11.500px] leading-[45px] whitespace-pre">
          DE_ppt_2-1.pptx -  PowerPoint (Product Activation Failed)
        </div>
        <div className="pl-px flex">
          <div className="w-[46px] h-[38px] flex items-center justify-center"><HelpIcon /></div>
          <div className="w-[46px] h-[38px] flex items-center justify-center"><DisplayIcon /></div>
          <div className="w-[46px] h-[38px] flex items-center justify-center"><MinIcon /></div>
          <div className="w-[46px] h-[38px] flex items-center justify-center"><RestoreIcon /></div>
          <div className="w-[46px] h-[38px] flex items-center justify-center"><CloseIcon /></div>
        </div>
      </div>

      <div className="h-[30px] shrink-0 flex text-[11.200px] border-b border-[#d2d2d2] whitespace-nowrap">
        <div className="w-[65px] h-[30px] bg-[#d24726] text-white text-center leading-[31px]">FILE</div>
        <div className="w-[65px] h-[30px] ml-[4px] bg-white border-x border-t border-[#d2d2d2] text-[#d24726] text-center leading-[30px]">HOME</div>
        {tabs.map((tab) => (
          <div key={tab.t} className={`${tab.w} text-center leading-[31px] flex justify-center`}>{tab.t}</div>
        ))}
        <div className="ml-auto flex items-start">
          <svg width="15" height="14" viewBox="0 0 15 14" className="mt-[5px]">
            <path d="M7.500 0L15 14H0z" fill="#eac27a" />
            <path d="M7.500 4.500v5M7.500 10.500v2" stroke="#333" strokeWidth="1.600" />
          </svg>
          <div className="w-[71px] ml-[5px] leading-[24px] text-[#444]">shishir trivedi</div>
          <Caret className="mt-[11px] ml-[5px]" />
          <div className="w-[24px] h-[24px] ml-[6px] mr-[18px] bg-[#b6b6b6] overflow-hidden">
            <svg width="24" height="24" viewBox="0 0 24 24" fill="#fff">
              <circle cx="12" cy="9" r="5.500" />
              <path d="M2 24q0-7 7-8h6q7 1 7 8z" />
            </svg>
          </div>
        </div>
      </div>

      <Ribbon />

      <div className="h-[500px] flex overflow-hidden bg-gradient-to-b from-[#ffffff] to-[#efefef]">
        <Pane />
        <Editor />
      </div>

      <StatusBar />
      <Taskbar />
    </div>
  );
}
